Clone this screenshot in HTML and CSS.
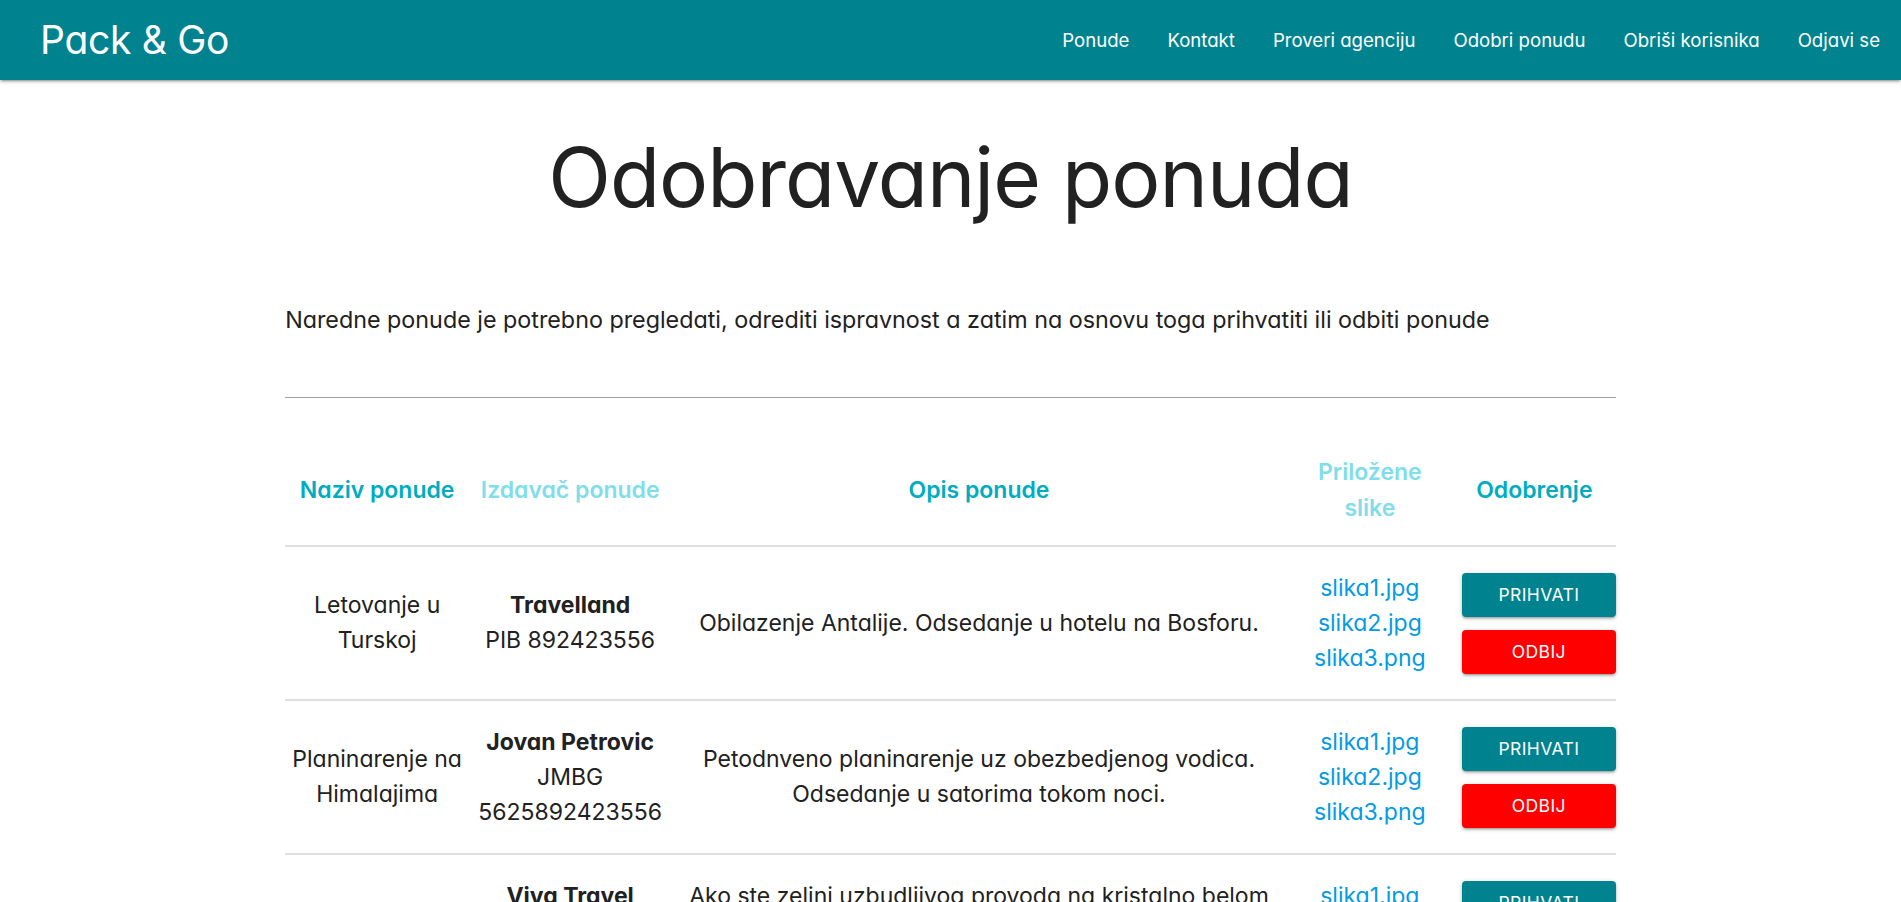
FILE: index.html
```html
<!DOCTYPE html>
<html lang="sr">
<head>
<meta charset="utf-8">
<title>Pack &amp; Go - Odobravanje ponuda</title>
<link rel="stylesheet" href="styles.css">
</head>
<body>
<header class="topbar">
  <a class="brand" href="#">Pack &amp; Go</a>
  <nav class="menu">
    <a href="#">Ponude</a>
    <a href="#">Kontakt</a>
    <a href="#">Proveri agenciju</a>
    <a href="#">Odobri ponudu</a>
    <a href="#">Obriši korisnika</a>
    <a href="#">Odjavi se</a>
  </nav>
</header>
<main class="container">
  <h1 class="title">Odobravanje ponuda</h1>
  <p class="lead">Naredne ponude je potrebno pregledati, odrediti ispravnost a zatim na osnovu toga prihvatiti ili odbiti ponude</p>
  <hr class="divider">
  <table class="offers">
    <colgroup>
      <col class="c-name"><col class="c-pub"><col class="c-desc"><col class="c-img"><col class="c-act">
    </colgroup>
    <thead>
      <tr>
        <th class="th-dark">Naziv ponude</th>
        <th class="th-light">Izdavač ponude</th>
        <th class="th-dark">Opis ponude</th>
        <th class="th-light">Priložene slike</th>
        <th class="th-dark">Odobrenje</th>
      </tr>
    </thead>
    <tbody>
      <tr>
        <td>Letovanje u Turskoj</td>
        <td><b>Travelland</b><br>PIB 892423556</td>
        <td>Obilazenje Antalije. Odsedanje u hotelu na Bosforu.</td>
        <td class="files"><a href="#">slika1.jpg</a><a href="#">slika2.jpg</a><a href="#">slika3.png</a></td>
        <td class="actions"><button class="btn btn-ok">Prihvati</button><button class="btn btn-no">Odbij</button></td>
      </tr>
      <tr>
        <td>Planinarenje na Himalajima</td>
        <td><b>Jovan Petrovic</b><br>JMBG 5625892423556</td>
        <td>Petodnveno planinarenje uz obezbedjenog vodica. Odsedanje u satorima tokom noci.</td>
        <td class="files"><a href="#">slika1.jpg</a><a href="#">slika2.jpg</a><a href="#">slika3.png</a></td>
        <td class="actions"><button class="btn btn-ok">Prihvati</button><button class="btn btn-no">Odbij</button></td>
      </tr>
      <tr>
        <td>Letovanje na Maldivima</td>
        <td><b>Viva Travel</b><br>PIB 108236715<br>Beograd</td>
        <td>Ako ste zelini uzbudljivog provoda na kristalno belom pesku, ovo je prava ponuda za vas. Sedam dana na ostrvu.</td>
        <td class="files"><a href="#">slika1.jpg</a><a href="#">slika2.jpg</a><a href="#">slika3.png</a></td>
        <td class="actions"><button class="btn btn-ok">Prihvati</button><button class="btn btn-no">Odbij</button></td>
      </tr>
    </tbody>
  </table>
</main>
</body>
</html>
```
FILE: styles.css
```css
html, body {
  margin: 0;
  padding: 0;
}
body {
  font-family: Inter, "Noto Sans", sans-serif;
  font-feature-settings: "cv11" 1;
  color: #212121;
  background: #fff;
  font-size: 23px;
  line-height: 35px;
}
.topbar {
  height: 80px;
  background: #00838f;
  display: flex;
  align-items: center;
  justify-content: space-between;
  padding: 0 2px 0 40px;
  box-shadow: 0 2px 2px 0 rgba(0,0,0,0.14), 0 3px 1px -2px rgba(0,0,0,0.12), 0 1px 5px 0 rgba(0,0,0,0.2);
  position: relative;
  z-index: 2;
}
.brand {
  color: #fff;
  text-decoration: none;
  font-size: 39px;
  line-height: 80px;
  letter-spacing: -0.3px;
}
.menu {
  display: flex;
}
.menu a {
  color: #fff;
  text-decoration: none;
  font-size: 18.6px;
  padding: 0 19px;
  line-height: 80px;
}
.container {
  width: 70%;
  margin: 0 auto;
}
.title {
  margin: 54px 0 0;
  text-align: center;
  font-size: 82px;
  font-weight: 400;
  line-height: 87px;
  letter-spacing: -1px;
}
.lead {
  margin: 81px 0 0;
  font-size: 23.3px;
  line-height: 35px;
}
.divider {
  margin: 60px 0 0;
  border: 0;
  border-top: 1px solid #9e9e9e;
}
.offers {
  margin-top: 37px;
  width: 100%;
  border-collapse: collapse;
  table-layout: fixed;
}
.c-name { width: 184px; }
.c-pub { width: 202px; }
.c-desc { width: auto; }
.c-img { width: 166px; }
.c-act { width: 163px; }
.offers tr {
  border-bottom: 2px solid #e0e0e0;
}
.offers th {
  padding: 19px 5px;
  font-size: 23px;
  font-weight: 600;
  line-height: 36px;
  text-align: center;
  vertical-align: middle;
}
.th-dark { color: #00acc1; }
.th-light { color: #80deea; }
.offers td {
  padding: 23.5px 5px;
  text-align: center;
  vertical-align: middle;
}
.files a {
  display: block;
  color: #039be5;
  text-decoration: none;
}
.actions {
  padding-right: 0 !important;
}
.btn {
  display: block;
  width: 154px;
  height: 44px;
  margin: 0 0 0 auto;
  border: 0;
  border-radius: 4px;
  color: #fff;
  font-family: inherit;
  font-size: 17.5px;
  text-transform: uppercase;
  letter-spacing: 0.4px;
  box-shadow: 0 2px 2px 0 rgba(0,0,0,0.14), 0 3px 1px -2px rgba(0,0,0,0.12), 0 1px 5px 0 rgba(0,0,0,0.2);
  cursor: pointer;
}
.btn + .btn {
  margin-top: 13px;
}
.btn-ok { background: #00838f; }
.btn-no { background: #ff0000; }
```
